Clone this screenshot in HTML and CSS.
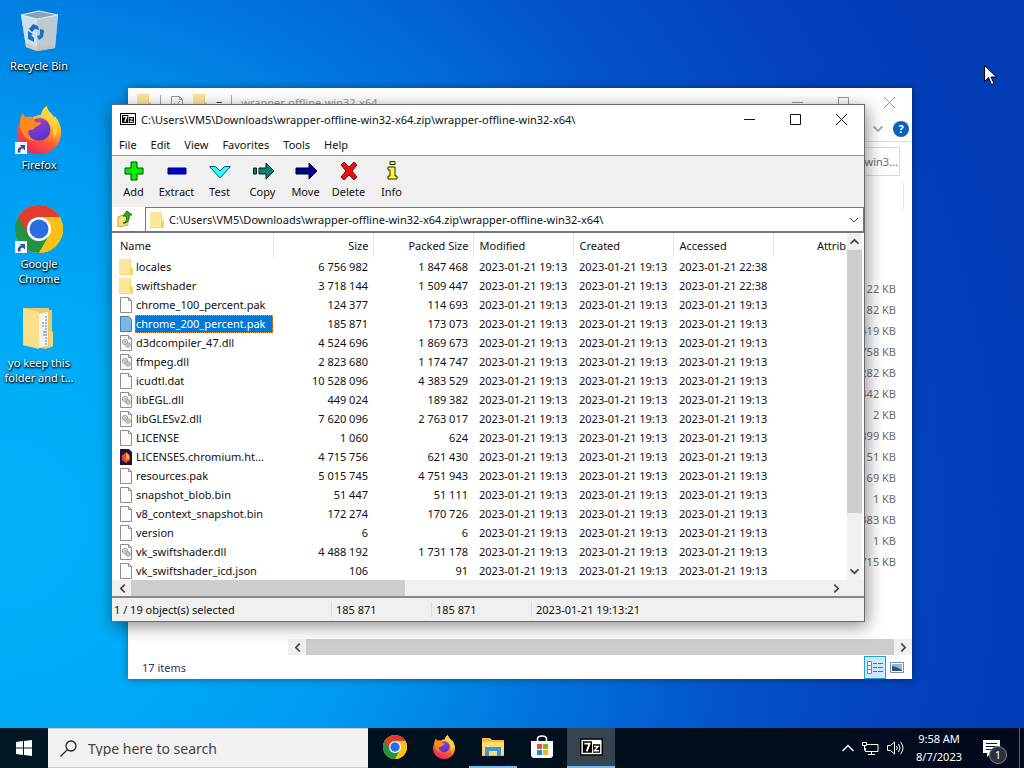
FILE: index.html
```
<!DOCTYPE html>
<html lang="en">
<head>
    <meta charset="utf-8">
    <title>Desktop</title>
    <link rel="stylesheet" href="styles.css">
</head>
<body>
    <!-- shared icons -->
    <svg class="sprites" width="0" height="0">
        <symbol id="folder" viewBox="0 0 14 16">
            <path d="M0 0h12v8l2 1v7H0z" fill="#f5d77b"/>
            <path d="M0 0h11v15H0z" fill="#fde59a"/>
            <path d="M11 9h2v6h-2z" fill="#f7cf58"/>
        </symbol>
        <symbol id="file" viewBox="0 0 12 16">
            <path d="M.5.5h8l3 3v12H.5z" fill="#fbfbfb" stroke="#8e8e8e"/>
            <path d="M8.500.5v3h3" fill="none" stroke="#8e8e8e"/>
        </symbol>
        <symbol id="dll" viewBox="0 0 12 16">
            <path d="M.5.5h8l3 3v12H.5z" fill="#fbfbfb" stroke="#8e8e8e"/>
            <path d="M8.500.5v3h3" fill="none" stroke="#8e8e8e"/>
            <circle cx="5" cy="7" r="2.500" fill="#eee" stroke="#8b8f94"/>
            <circle cx="8" cy="10" r="2.200" fill="#eee" stroke="#8b8f94"/>
            <circle cx="5" cy="7" r=".8" fill="#777"/>
            <circle cx="8" cy="10" r=".7" fill="#777"/>
        </symbol>
        <symbol id="sevenzip" viewBox="0 0 24 18">
            <path d="M0 0h24v18H0z" fill="#000"/>
            <path d="M1.500 1.500h21v15h-21z" fill="#fff"/>
            <path d="M3 3h9.500v12H3zM13.500 6H21v9h-7.500z" fill="#000"/>
            <path d="M4.500 5.500H10L7 13.500" fill="none" stroke="#fff" stroke-width="2"/>
            <path d="M14.500 8.500h4.500l-4 4.500h5" fill="none" stroke="#fff" stroke-width="1.500"/>
        </symbol>
        <symbol id="chrome" viewBox="0 0 48 48">
            <circle cx="24" cy="24" r="24" fill="#fbc116"/>
            <path d="M24 24L3.200 12A24 24 0 0 0 24 48L34.400 30z" fill="#229342"/>
            <path d="M24 24V12h20.800A24 24 0 0 0 3.200 12l10.400 18z" fill="#e33b2e"/>
            <path d="M24 24v-12h20.800A24 24 0 0 1 24 48l10.400-18z" fill="#fbc116"/>
            <circle cx="24" cy="24" r="12" fill="#fff"/>
            <circle cx="24" cy="24" r="9.500" fill="#2a6fe0"/>
        </symbol>
        <symbol id="firefox" viewBox="0 0 48 50">
            <defs>
                <linearGradient id="flame" x1=".8" y1="0" x2=".25" y2="1">
                    <stop offset="0" stop-color="#fff44f"/>
                    <stop offset=".35" stop-color="#ffb02e"/>
                    <stop offset=".62" stop-color="#ff5a36"/>
                    <stop offset="1" stop-color="#e82061"/>
                </linearGradient>
                <linearGradient id="globe" x1="0" y1="0" x2=".4" y2="1">
                    <stop offset="0" stop-color="#b13dd4"/>
                    <stop offset="1" stop-color="#5537c5"/>
                </linearGradient>
            </defs>
            <path d="M4 19C4 15 5 11 7 8l3 4c2-1 5-1 7 0 3-2 6-3 9-3 1-4 3-7 6-9 1 6 6 8 8 12l1-1c4 5 6 10 6 16 0 14-10 23-23 23S1 41 1 27c0-3 1-6 3-8z" fill="url(#flame)"/>
            <path d="M19 14c6-3 14 0 16 6 3 8-2 16-11 16-8 0-12-6-11-11l7-4z" fill="url(#globe)"/>
            <path d="M4 19C4 15 5 11 7 8l3 4c3-1 6-1 8 1 1 1 1 3 3 4h5c0 3-4 4-6 5-1 3-4 3-7 3-1 5 2 9 7 11-8 1-15-6-16-17z" fill="#ff8a1d"/>
            <path d="M26 10c1-4 3-8 6-10 1 6 6 8 8 12 4 7 4 16-1 22 1-12-3-19-13-24z" fill="#ffd53a"/>
        </symbol>
        <symbol id="shortcut" viewBox="0 0 12 12">
            <path d="M0 0h12v12H0z" fill="#f4f6f9"/>
            <path d="M3 10.500C2 7 4 5 6.500 5L4.500 3H10v5.500L8 6.500C6 6.500 5 8 5.500 10.500z" fill="#25569f"/>
        </symbol>
        <symbol id="chevron" viewBox="0 0 8 8">
            <path d="M.5 2L4 5.500 7.500 2" fill="none" stroke="currentColor" stroke-width="1.500"/>
        </symbol>
        <symbol id="thin-chevron" viewBox="0 0 10 10">
            <path d="M1 3l4 4 4-4" fill="none" stroke="currentColor"/>
        </symbol>
    </svg>

    <main class="desktop">
        <div class="shortcuts">
            <a class="shortcut" href="#">
                <svg class="picture" viewBox="0 0 48 48">
                    <path d="M6 8l5 32 11 4 18-3 3-33-20-4z" fill="#b4c9d8"/>
                    <path d="M6 8l16 4v32l-11-4z" fill="#cfe0ec"/>
                    <path d="M22 12l21-4-3 33-18 3z" fill="#bccad4"/>
                    <path d="M6 8l18-4 19 4-21 4z" fill="#86a3b4" stroke="#e3eef5"/>
                    <path d="M11 36l11 4 18-3-.5 4L22 44l-11-4z" fill="#d3b9a8" opacity=".6"/>
                    <path d="M14 22l4-5 5 2 1 4-4-1-3 3zM25 22l4 1-1 7-4 3-2-4 3-1zM13 24l5 3-2 1 3 3v4l-6-3z" fill="#1670c4"/>
                </svg>
                <span>Recycle Bin</span>
            </a>
            <a class="shortcut" href="#">
                <span class="linked">
                    <svg class="picture"><use href="#firefox"/></svg>
                    <svg class="arrow"><use href="#shortcut"/></svg>
                </span>
                <span>Firefox</span>
            </a>
            <a class="shortcut" href="#">
                <span class="linked">
                    <svg class="picture"><use href="#chrome"/></svg>
                    <svg class="arrow"><use href="#shortcut"/></svg>
                </span>
                <span>Google<br>Chrome</span>
            </a>
            <a class="shortcut" href="#">
                <svg class="picture" viewBox="0 0 48 48">
                    <path d="M8 4h26v2h3v36l-6 3-23-4z" fill="#e9c969"/>
                    <path d="M22 10l11-2v34l-11 2z" fill="#eef2f5"/>
                    <path d="M31 12v30M28 18v6M29 27v5" stroke="#687d91" stroke-dasharray="2 1"/>
                    <path d="M8 4l16 4v37L8 41z" fill="#fbe08b"/>
                    <path d="M34 26l4 2v14l-4 2z" fill="#f6d977"/>
                </svg>
                <span>yo keep this<br>folder and t...</span>
            </a>
        </div>

        <section class="window explorer">
            <header class="explorer-title">
                <svg class="small-icon"><use href="#folder"/></svg>
                <span class="divider"></span>
                <svg class="small-icon" viewBox="0 0 12 16">
                    <path d="M.5 2.500h8l3 3v10H.5zM8.500 2.500v3h3M3 9l2 3 4-5" fill="none" stroke="#999"/>
                </svg>
                <svg class="small-icon"><use href="#folder"/></svg>
                <span class="quick">=</span>
                <span class="divider"></span>
                <span class="caption">wrapper-offline-win32-x64</span>
                <span class="controls">
                    <button aria-label="Minimize"><svg viewBox="0 0 11 11"><path d="M0 5.500h11"/></svg></button>
                    <button aria-label="Maximize"><svg viewBox="0 0 11 11"><path d="M.5.5h10v10H.5z"/></svg></button>
                    <button aria-label="Close"><svg viewBox="0 0 11 11"><path d="M0 0l11 11M11 0L0 11"/></svg></button>
                </span>
            </header>
            <div class="ribbon">
                <svg class="chev"><use href="#chevron"/></svg>
                <button class="help" aria-label="Help">?</button>
            </div>
            <div class="search-row">
                <input type="text" aria-label="Search folder" value="Search wrapper-offline-win3...">
            </div>
            <div class="explorer-head"></div>
            <ul class="sizes">
                <li>122 KB</li>
                <li>182 KB</li>
                <li>419 KB</li>
                <li>758 KB</li>
                <li>282 KB</li>
                <li>442 KB</li>
                <li>2 KB</li>
                <li>899 KB</li>
                <li>51 KB</li>
                <li>169 KB</li>
                <li>1 KB</li>
                <li>383 KB</li>
                <li>1 KB</li>
                <li>715 KB</li>
            </ul>
            <div class="hscroll explorer-scroll">
                <button class="left" aria-label="Scroll left"><svg><use href="#chevron"/></svg></button>
                <span class="thumb"></span>
                <button class="right" aria-label="Scroll right"><svg><use href="#chevron"/></svg></button>
            </div>
            <footer class="explorer-status">
                <span>17 items</span>
                <button class="view active" aria-label="Details view">
                    <svg width="16" height="13" viewBox="0 0 16 13">
                        <path d="M.5.5h4v12h-4zM.5 4.500h4M.5 8.500h4" fill="#fff" stroke="#6b87a0"/>
                        <path d="M6 2.500h4m1 0h5M6 6.500h4m1 0h5M6 10.500h4m1 0h5" stroke="#4d6f8d"/>
                    </svg>
                </button>
                <button class="view" aria-label="Large icons view">
                    <svg width="14" height="11" viewBox="0 0 14 11">
                        <path d="M.5.5h13v10H.5z" fill="#fff" stroke="#7a8ea0"/>
                        <path d="M2 2h10v7H2z" fill="#8db9e4"/>
                        <path d="M2 4l4 1 6 3v1H2z" fill="#2f5277"/>
                    </svg>
                </button>
            </footer>
        </section>

        <section class="window archive">
            <header class="title">
                <svg class="app-icon"><use href="#sevenzip"/></svg>
                <span class="caption">C:\Users\VM5\Downloads\wrapper-offline-win32-x64.zip\wrapper-offline-win32-x64\</span>
                <span class="controls">
                    <button aria-label="Minimize"><svg viewBox="0 0 11 11"><path d="M0 5.500h11"/></svg></button>
                    <button aria-label="Maximize"><svg viewBox="0 0 11 11"><path d="M.5.5h10v10H.5z"/></svg></button>
                    <button aria-label="Close"><svg viewBox="0 0 11 11"><path d="M0 0l11 11M11 0L0 11"/></svg></button>
                </span>
            </header>
            <nav class="menu">
                <button>File</button>
                <button>Edit</button>
                <button>View</button>
                <button>Favorites</button>
                <button>Tools</button>
                <button>Help</button>
            </nav>
            <div class="toolbar">
                <button>
                    <svg viewBox="0 0 24 20"><path d="M9 1h6v6h6v6h-6v6H9v-6H3V7h6z" fill="#00f000" stroke="#064b06"/></svg>
                    Add
                </button>
                <button>
                    <svg viewBox="0 0 24 20"><path d="M3 7h18v6H3z" fill="#0000dc" stroke="#000050"/></svg>
                    Extract
                </button>
                <button>
                    <svg viewBox="0 0 24 20"><path d="M1.500 5.500h6L12 10l4.500-4.500h6L12 17z" fill="#2ff" stroke="#145a66"/></svg>
                    Test
                </button>
                <button>
                    <svg viewBox="0 0 24 20"><path d="M2.500 7h3v6h-3zM8 7h7V2l8 8-8 8v-5H8z" fill="#117c6b" stroke="#04231e"/></svg>
                    Copy
                </button>
                <button>
                    <svg viewBox="0 0 24 20"><path d="M2 7h13V2l8 8-8 8v-5H2z" fill="#000090" stroke="#000022"/></svg>
                    Move
                </button>
                <button>
                    <svg viewBox="0 0 24 20"><path d="M4 4l3-3 5 5 5-5 3 3-5 6 5 6-3 3-5-5-5 5-3-3 5-6z" fill="#e81010" stroke="#6b1515"/></svg>
                    Delete
                </button>
                <button>
                    <svg viewBox="0 0 24 20"><path d="M10 .5h5v3h-5zM8 6h7v9h2v3H8v-3h2V9H8z" fill="#ff2" stroke="#222"/></svg>
                    Info
                </button>
            </div>
            <div class="address">
                <button class="up" aria-label="Up one level">
                    <svg width="16" height="16" viewBox="0 0 16 16">
                        <path d="M1 6l5-2 1 1 4-1v10l-10 2z" fill="#f8e27a" stroke="#c3a233"/>
                        <path d="M6 12c4-1 4-4 3-7H6l4-5 5 4h-3c1 4-1 9-6 8z" fill="#3fa81b" stroke="#1b6d0d"/>
                    </svg>
                </button>
                <label class="path">
                    <svg class="path-icon"><use href="#folder"/></svg>
                    <select aria-label="Folder path">
                        <option>C:\Users\VM5\Downloads\wrapper-offline-win32-x64.zip\wrapper-offline-win32-x64\</option>
                    </select>
                    <svg class="chev"><use href="#thin-chevron"/></svg>
                </label>
            </div>
            <div class="list">
                <table>
                    <thead>
                        <tr>
                            <th class="name">Name</th>
                            <th class="num">Size</th>
                            <th class="num">Packed Size</th>
                            <th>Modified</th>
                            <th>Created</th>
                            <th>Accessed</th>
                            <th class="attrib">Attrib</th>
                        </tr>
                    </thead>
                    <tbody>
                        <tr><td><svg class="folder"><use href="#folder"/></svg><span>locales</span></td><td>6 756 982</td><td>1 847 468</td><td>2023-01-21 19:13</td><td>2023-01-21 19:13</td><td>2023-01-21 22:38</td><td></td></tr>
                        <tr><td><svg class="folder"><use href="#folder"/></svg><span>swiftshader</span></td><td>3 718 144</td><td>1 509 447</td><td>2023-01-21 19:13</td><td>2023-01-21 19:13</td><td>2023-01-21 22:38</td><td></td></tr>
                        <tr><td><svg><use href="#file"/></svg><span>chrome_100_percent.pak</span></td><td>124 377</td><td>114 693</td><td>2023-01-21 19:13</td><td>2023-01-21 19:13</td><td>2023-01-21 19:13</td><td></td></tr>
                        <tr class="selected"><td><svg viewBox="0 0 12 16"><path d="M.5.5h8l3 3v12H.5z" fill="#7ab8ea" stroke="#4a7ba8"/></svg><span>chrome_200_percent.pak</span></td><td>185 871</td><td>173 073</td><td>2023-01-21 19:13</td><td>2023-01-21 19:13</td><td>2023-01-21 19:13</td><td></td></tr>
                        <tr><td><svg><use href="#dll"/></svg><span>d3dcompiler_47.dll</span></td><td>4 524 696</td><td>1 869 673</td><td>2023-01-21 19:13</td><td>2023-01-21 19:13</td><td>2023-01-21 19:13</td><td></td></tr>
                        <tr><td><svg><use href="#dll"/></svg><span>ffmpeg.dll</span></td><td>2 823 680</td><td>1 174 747</td><td>2023-01-21 19:13</td><td>2023-01-21 19:13</td><td>2023-01-21 19:13</td><td></td></tr>
                        <tr><td><svg><use href="#file"/></svg><span>icudtl.dat</span></td><td>10 528 096</td><td>4 383 529</td><td>2023-01-21 19:13</td><td>2023-01-21 19:13</td><td>2023-01-21 19:13</td><td></td></tr>
                        <tr><td><svg><use href="#dll"/></svg><span>libEGL.dll</span></td><td>449 024</td><td>189 382</td><td>2023-01-21 19:13</td><td>2023-01-21 19:13</td><td>2023-01-21 19:13</td><td></td></tr>
                        <tr><td><svg><use href="#dll"/></svg><span>libGLESv2.dll</span></td><td>7 620 096</td><td>2 763 017</td><td>2023-01-21 19:13</td><td>2023-01-21 19:13</td><td>2023-01-21 19:13</td><td></td></tr>
                        <tr><td><svg><use href="#file"/></svg><span>LICENSE</span></td><td>1 060</td><td>624</td><td>2023-01-21 19:13</td><td>2023-01-21 19:13</td><td>2023-01-21 19:13</td><td></td></tr>
                        <tr><td><svg viewBox="0 0 12 16"><path d="M0 0h9l3 3v13H0z" fill="#20123a"/><path d="M2 6l2-1 3-2 3 4v4l-4 3-4-3z" fill="#f0403a"/><path d="M6 4l3 2v4l-3 1z" fill="#ffb62e"/></svg><span>LICENSES.chromium.ht...</span></td><td>4 715 756</td><td>621 430</td><td>2023-01-21 19:13</td><td>2023-01-21 19:13</td><td>2023-01-21 19:13</td><td></td></tr>
                        <tr><td><svg><use href="#file"/></svg><span>resources.pak</span></td><td>5 015 745</td><td>4 751 943</td><td>2023-01-21 19:13</td><td>2023-01-21 19:13</td><td>2023-01-21 19:13</td><td></td></tr>
                        <tr><td><svg><use href="#file"/></svg><span>snapshot_blob.bin</span></td><td>51 447</td><td>51 111</td><td>2023-01-21 19:13</td><td>2023-01-21 19:13</td><td>2023-01-21 19:13</td><td></td></tr>
                        <tr><td><svg><use href="#file"/></svg><span>v8_context_snapshot.bin</span></td><td>172 274</td><td>170 726</td><td>2023-01-21 19:13</td><td>2023-01-21 19:13</td><td>2023-01-21 19:13</td><td></td></tr>
                        <tr><td><svg><use href="#file"/></svg><span>version</span></td><td>6</td><td>6</td><td>2023-01-21 19:13</td><td>2023-01-21 19:13</td><td>2023-01-21 19:13</td><td></td></tr>
                        <tr><td><svg><use href="#dll"/></svg><span>vk_swiftshader.dll</span></td><td>4 488 192</td><td>1 731 178</td><td>2023-01-21 19:13</td><td>2023-01-21 19:13</td><td>2023-01-21 19:13</td><td></td></tr>
                        <tr><td><svg><use href="#file"/></svg><span>vk_swiftshader_icd.json</span></td><td>106</td><td>91</td><td>2023-01-21 19:13</td><td>2023-01-21 19:13</td><td>2023-01-21 19:13</td><td></td></tr>
                    </tbody>
                </table>
                <div class="vscroll">
                    <button class="top" aria-label="Scroll up"><svg><use href="#chevron"/></svg></button>
                    <span class="thumb"></span>
                    <button aria-label="Scroll down"><svg><use href="#chevron"/></svg></button>
                </div>
            </div>
            <div class="hscroll list-scroll">
                <button class="left" aria-label="Scroll left"><svg><use href="#chevron"/></svg></button>
                <span class="thumb"></span>
                <button class="right" aria-label="Scroll right"><svg><use href="#chevron"/></svg></button>
            </div>
            <footer class="status">
                <span class="selected-count">1 / 19 object(s) selected</span>
                <span>185 871</span>
                <span>185 871</span>
                <span class="stamp">2023-01-21 19:13:21</span>
            </footer>
        </section>

        <svg class="cursor" width="13" height="20" viewBox="0 0 13 20">
            <path d="M.5.5v16l4-4 3 7 2.500-1-3-6.500h5.500z" fill="#fff" stroke="#000"/>
        </svg>
    </main>

    <footer class="taskbar">
        <button class="start" aria-label="Start">
            <svg width="16" height="16" viewBox="0 0 16 16"><path d="M0 2l7-1v6.500H0zM8 1l8-1v7.500H8zM0 8.500h7V15l-7-1zM8 8.500h8V16l-8-1z" fill="#fff"/></svg>
        </button>
        <label class="search">
            <svg width="17" height="17" viewBox="0 0 17 17" fill="none" stroke="#222" stroke-width="1.300"><circle cx="11" cy="6" r="5"/><path d="M7.500 9.500L.5 16.500"/></svg>
            <input type="text" aria-label="Search" placeholder="Type here to search">
        </label>
        <nav class="apps">
            <button aria-label="Google Chrome"><svg width="24" height="24"><use href="#chrome"/></svg></button>
            <button aria-label="Firefox"><svg width="24" height="24"><use href="#firefox"/></svg></button>
            <button class="running" aria-label="File Explorer">
                <svg width="22" height="20" viewBox="0 0 22 20">
                    <path d="M0 1h8l2 2h12v16H0z" fill="#f4bd3e"/>
                    <path d="M0 5h22v13H0z" fill="#ffdb72"/>
                    <path d="M3 10h16v9h-4v-5H7v5H3z" fill="#3b94dc"/>
                </svg>
            </button>
            <button aria-label="Store">
                <svg width="24" height="24" viewBox="0 0 24 24">
                    <path d="M7.500 8V4q0-3 4.500-3t4.500 3v4" fill="none" stroke="#fff" stroke-width="1.500"/>
                    <path d="M1 6h22v15l-2 2H3l-2-2z" fill="#fff"/>
                    <path d="M7 9h5v5H7z" fill="#e64f27"/><path d="M13 9h5v5h-5z" fill="#80b51c"/>
                    <path d="M7 15h5v5H7z" fill="#1c8fd2"/><path d="M13 15h5v5h-5z" fill="#f4b51e"/>
                </svg>
            </button>
            <button class="running current" aria-label="7-Zip"><svg width="23" height="18"><use href="#sevenzip"/></svg></button>
        </nav>
        <div class="tray">
            <svg width="12" height="8" viewBox="0 0 12 8"><path d="M.5 7L6 1.500 11.500 7" stroke-width="1.500"/></svg>
            <svg width="17" height="15" viewBox="0 0 17 15"><path d="M5 3.500h11v7H3.500V7M.5 1.500h4v3h-4zM2.500 4.500v5M9.500 10.500v3M6 13.500h7"/></svg>
            <svg width="17" height="14" viewBox="0 0 17 14"><path d="M.5 4.500h3l4-3.500v12l-4-3.500h-3zM9.500 5q1.500 2 0 4M11.500 3q3 4 0 8M13.500 1q5 6 0 12"/></svg>
        </div>
        <div class="clock">
            <span>9:58 AM</span>
            <span>8/7/2023</span>
        </div>
        <button class="notifications" aria-label="Notifications">
            <svg width="17" height="17" viewBox="0 0 17 17"><path d="M0 0h17v13h-9l-4 4v-4H0z" fill="#fff"/><path d="M3 3.500h11M3 6.500h11M3 9.500h7" stroke="#04142a"/></svg>
            <span class="badge">1</span>
        </button>
        <span class="show-desktop"></span>
    </footer>
</body>
</html>
```
FILE: styles.css
```
* {
    box-sizing: border-box;
}
body {
    margin: 0;
    height: 100vh;
    display: flex;
    flex-direction: column;
    overflow: hidden;
    font-family: "Noto Sans", "Open Sans", sans-serif;
    font-size: 11px;
    line-height: 15px;
    color: #111;
    background: radial-gradient(circle at 0 68%, #00b2fa 0, #00acf8 180px, #009af0 380px, #0074dc 570px, #0452c8 760px, #0340ba 940px, #023ab2 1200px);
}
button, input, select {
    font: inherit;
    color: inherit;
    border: 0;
    padding: 0;
    margin: 0;
    background: none;
}
.sprites {
    position: absolute;
}

/* desktop */
.desktop {
    flex: 1;
    position: relative;
    min-height: 0;
}
.shortcuts {
    width: 78px;
    padding-top: 7px;
}
.shortcut {
    display: flex;
    flex-direction: column;
    align-items: center;
    gap: 3px;
    height: 99px;
    color: #fff;
    text-align: center;
    text-decoration: none;
    text-shadow: 0 1px 2px #000, 1px 1px 2px #000;
    white-space: nowrap;
}
.picture {
    display: block;
    width: 48px;
    height: 48px;
}
.linked {
    position: relative;
}
.arrow {
    position: absolute;
    left: 0;
    bottom: 0;
    width: 12px;
    height: 12px;
}
.cursor {
    position: absolute;
    left: 984px;
    top: 65px;
}

/* windows */
.window {
    position: absolute;
    background: #fff;
}
.controls {
    display: flex;
    margin-left: auto;
}
.controls button {
    width: 46px;
    height: 28px;
}
.controls svg {
    display: block;
    width: 11px;
    height: 11px;
    margin: auto;
    fill: none;
    stroke: currentColor;
}
.chev {
    width: 10px;
    height: 10px;
    color: #444;
}

/* file explorer behind */
.explorer {
    left: 128px;
    right: 112px;
    top: 88px;
    color: #6d6d6d;
    box-shadow: 0 0 8px rgba(0, 0, 0, 0.4);
}
.explorer-title {
    display: flex;
    align-items: center;
    gap: 9px;
    height: 28px;
    padding-left: 9px;
    color: #999;
}
.small-icon {
    width: 14px;
    height: 16px;
}
.divider {
    width: 1px;
    height: 14px;
    background: #aaa;
}
.quick {
    color: #333;
}
.ribbon {
    display: flex;
    justify-content: flex-end;
    align-items: center;
    gap: 10px;
    height: 26px;
    padding-right: 3px;
    border-bottom: 1px solid #ddd;
}
.ribbon .chev {
    color: #aaa;
}
.help {
    width: 16px;
    height: 16px;
    border-radius: 50%;
    background: #0a63b8;
    color: #fff;
    font-weight: bold;
}
.search-row {
    display: flex;
    justify-content: flex-end;
    padding: 5px 12px 7px;
}
.search-row input {
    width: 240px;
    height: 29px;
    padding-right: 1px;
    border: 1px solid #d9d9d9;
    text-align: right;
}
.explorer-head {
    height: 26px;
    margin-right: 8px;
    border-right: 1px solid #e5e5e5;
}
.sizes {
    list-style: none;
    margin: 0;
    padding: 69px 16px 67px;
    text-align: right;
    line-height: 21px;
}
.explorer-scroll {
    margin-left: 160px;
}
.explorer-scroll .thumb {
    flex: 1;
}
.explorer-status {
    display: flex;
    align-items: center;
    height: 24px;
    padding-left: 14px;
    padding-right: 4px;
    color: #1e395b;
}
.view {
    display: grid;
    place-items: center;
    width: 22px;
    height: 23px;
}
.view.active {
    margin-left: auto;
    background: #cce8ff;
    border: 1px solid #26a0da;
}

/* scrollbars */
.hscroll {
    display: flex;
    height: 16px;
    background: #f0f0f0;
}
.hscroll button, .vscroll button {
    display: grid;
    place-items: center;
    width: 18px;
    color: #444;
}
.hscroll svg, .vscroll svg {
    width: 9px;
    height: 9px;
}
.hscroll .left svg {
    transform: rotate(90deg);
}
.hscroll .right svg {
    transform: rotate(-90deg);
}
.hscroll .right {
    margin-left: auto;
}
.thumb {
    background: #cdcdcd;
}
.vscroll {
    display: flex;
    flex-direction: column;
    width: 15px;
    background: #f0f0f0;
}
.vscroll button {
    width: 15px;
    height: 17px;
}
.vscroll .thumb {
    height: 263px;
    margin-bottom: auto;
}
.vscroll .top svg {
    transform: rotate(180deg);
}

/* archive window */
.archive {
    left: 111px;
    right: 159px;
    top: 104px;
    border: 1px solid #6a6a6a;
    box-shadow: 2px 4px 16px rgba(0, 0, 0, 0.45);
}
.title {
    display: flex;
    align-items: center;
    height: 28px;
    padding-left: 8px;
}
.app-icon {
    width: 16px;
    height: 12px;
    margin-right: 5px;
}
.menu {
    display: flex;
    gap: 14px;
    height: 23px;
    padding-left: 7px;
    border-bottom: 1px solid #999;
}
.toolbar {
    display: flex;
    height: 51px;
    background: #f0f0f0;
}
.toolbar button {
    display: flex;
    flex-direction: column;
    align-items: center;
    gap: 3px;
    width: 43px;
    padding-top: 5px;
}
.toolbar svg {
    width: 24px;
    height: 20px;
}
.address {
    display: flex;
    height: 26px;
    border-bottom: 2px solid #777;
}
.up {
    width: 31px;
    padding-right: 6px;
    display: grid;
    place-items: center;
}
.path {
    flex: 1;
    display: flex;
    align-items: center;
    margin-left: 2px;
    padding: 0 4px;
    border: 1px solid #777;
    border-bottom: 0;
}
.path-icon {
    width: 14px;
    height: 16px;
    margin-right: 5px;
}
.path select {
    flex: 1;
    min-width: 0;
    appearance: none;
}
.list {
    display: flex;
    padding-right: 2px;
    padding-left: 1px;
}
.list table {
    flex: 1;
    table-layout: fixed;
    border-collapse: collapse;
}
.list th {
    width: 100px;
    height: 24px;
    padding: 0 6px;
    border-right: 1px solid #e5e5e5;
    font-weight: normal;
    text-align: left;
    white-space: nowrap;
}
.list th.name {
    width: 160px;
    padding-left: 7px;
}
.list th.num {
    padding-right: 4px;
    text-align: right;
}
.list th.attrib {
    width: auto;
    padding: 0 1px 0 0;
    border: 0;
    text-align: right;
}
.list td {
    height: 19px;
    padding: 0 5px 0 6px;
    white-space: nowrap;
}
.list td:nth-child(2), .list td:nth-child(3) {
    text-align: right;
}
.list td:first-child {
    display: flex;
    align-items: center;
    gap: 2px;
    padding-right: 0;
}
.list td svg {
    flex: none;
    width: 14px;
    height: 16px;
}
.list td span {
    line-height: 18px;
    padding: 0 1px;
}
.selected td:first-child span {
    flex: 1;
    background: #0078d7;
    color: #fff;
    outline: 1px dotted #d98a3a;
    outline-offset: -1px;
}
.list-scroll .thumb {
    width: 274px;
}
.list-scroll {
    padding: 0 19px 0 1px;
}
.status {
    display: flex;
    height: 25px;
    align-items: center;
    border-top: 2px solid #8a8a8a;
    background: #f0f0f0;
}
.status span {
    width: 100px;
    padding-left: 4px;
    border-left: 1px solid #ddd;
}
.status .selected-count {
    width: 219px;
    padding-left: 2px;
    border: 0;
}
.status .stamp {
    flex: 1;
}

/* taskbar */
.taskbar {
    display: flex;
    align-items: center;
    height: 40px;
    background: linear-gradient(90deg, #001726, #00101f 50%, #020a1c);
    color: #fff;
}
.start {
    width: 48px;
}
.start svg, .apps svg {
    display: block;
    margin: auto;
}
.search {
    display: flex;
    align-items: center;
    gap: 11px;
    width: 320px;
    height: 40px;
    padding-left: 12px;
    background: #f2f2f2;
    color: #444;
    font-size: 14px;
    border: 1px solid #ccc;
    border-width: 1px 0;
}
.search input {
    flex: 1;
}
.search input::placeholder {
    color: #444;
    opacity: 1;
}
.apps {
    display: flex;
    gap: 1px;
    height: 40px;
    margin-left: 3px;
}
.apps button {
    width: 48px;
    border-bottom: 2px solid transparent;
}
.apps .running {
    border-bottom-color: #76b9ed;
}
.apps .current {
    background: #364350;
}
.tray {
    display: flex;
    align-items: center;
    gap: 8px;
    margin-left: auto;
    fill: none;
    stroke: #fff;
}
.clock {
    display: flex;
    flex-direction: column;
    width: 70px;
    line-height: 18px;
    text-align: center;
}
.notifications {
    position: relative;
    width: 45px;
    height: 40px;
}
.notifications svg {
    display: block;
    margin-left: 9px;
}
.badge {
    position: absolute;
    left: 15px;
    top: 18px;
    width: 18px;
    height: 18px;
    border: 1px solid #888;
    border-radius: 50%;
    background: #2b3140;
}
.show-desktop {
    width: 5px;
    height: 40px;
    border-left: 1px solid #5a6474;
}
```
